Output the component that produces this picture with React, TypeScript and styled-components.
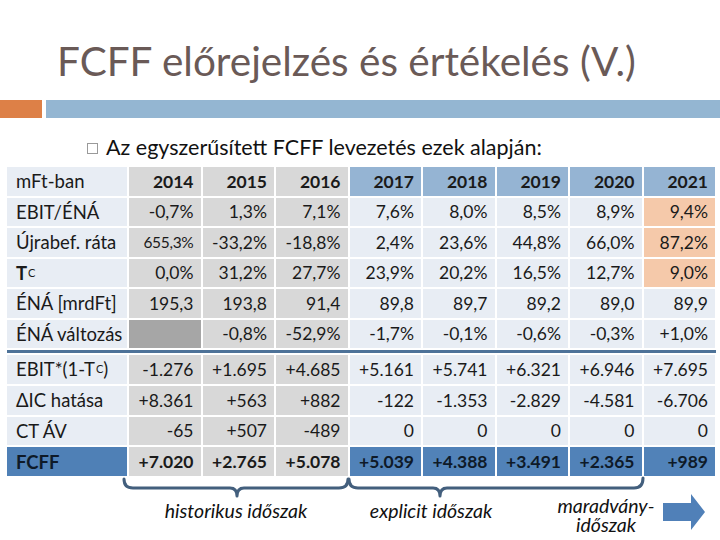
import React from "react";
import styled, { createGlobalStyle } from "styled-components";

const Global = createGlobalStyle`
  html, body { margin: 0; padding: 0; background: #ffffff; }
  body { width: 720px; height: 540px; overflow: hidden; font-family: Lato, "Open Sans", sans-serif; }
`;

const Page = styled.div`
  width: 720px;
  height: 540px;
  display: flex;
  flex-direction: column;
  background: #fff;
  & > * { flex: none; }
`;

const Title = styled.h1`
  margin: 36px 0 0 57px;
  font-family: Lato, sans-serif;
  font-weight: 400;
  font-size: 40.5px;
  line-height: 50px;
  color: #6a5a57;
  white-space: nowrap;
`;

const Bars = styled.div`
  margin-top: 14px;
  height: 18px;
  display: flex;
  gap: 4px;
`;

const Bar = styled.div<{ $color: string; $width?: number }>`
  background: ${(p) => p.$color};
  ${(p) => (p.$width ? `width: ${p.$width}px; flex: none;` : "flex: 1;")}
`;

const BulletLine = styled.div`
  margin: 16px 0 0 87px;
  height: 26px;
  display: flex;
  align-items: center;
  gap: 8px;
  font-size: 21.5px;
  color: #111;
  white-space: nowrap;
`;

const BulletBox = styled.span`
  width: 9px;
  height: 9px;
  border: 1px solid #9a9a9a;
  flex: none;
  margin-top: 2px;
`;

const Table = styled.div`
  margin: 7px 0 0 7px;
  display: grid;
  grid-template-columns: 120px repeat(8, 71.5px);
  grid-template-rows: repeat(6, 28.5px) 3px repeat(4, 28.8px);
  column-gap: 2px;
  row-gap: 2px;
`;

type Kind =
  | "label"
  | "hist"
  | "fore"
  | "foreHead"
  | "peach"
  | "dark"
  | "fcffLabel"
  | "fcffHist"
  | "fcffFore";

const bg: Record<Kind, string> = {
  label: "#e8edf4",
  hist: "#d8d8d8",
  fore: "#e8edf4",
  foreHead: "#95b4d3",
  peach: "#f5c9aa",
  dark: "#a6a6a6",
  fcffLabel: "#4f80b6",
  fcffHist: "#d8d8d8",
  fcffFore: "#5182b8",
};

const isLabel = (k: Kind) => k === "label" || k === "fcffLabel";

const Cell = styled.div<{ $kind: Kind; $bold?: boolean; $small?: boolean }>`
  background: ${(p) => bg[p.$kind]};
  display: flex;
  align-items: center;
  justify-content: ${(p) => (isLabel(p.$kind) ? "flex-start" : "flex-end")};
  padding: ${(p) => (isLabel(p.$kind) ? "0 0 0 9px" : "0 7px 0 0")};
  font-size: ${(p) => (p.$small ? "15.5px" : isLabel(p.$kind) ? "18.5px" : "17.5px")};
  font-weight: ${(p) => (p.$bold ? 700 : 400)};
  color: ${(p) => (p.$kind === "fcffFore" || p.$kind === "fcffLabel" ? "#0e1a28" : "#1a1a1a")};
  white-space: nowrap;
  letter-spacing: ${(p) => (p.$small ? "-0.3px" : "0")};
`;

const Sub = styled.sub`
  font-size: 11px;
  vertical-align: -5px;
  line-height: 0;
  margin-left: 1px;
`;

const Divider = styled.div`
  grid-column: 1 / -1;
  background: #4d7298;
  margin-right: -1px;
`;

const Braces = styled.svg`
  display: block;
`;

const Labels = styled.div`
  display: flex;
  align-items: flex-start;
  height: 41px;
`;

const Caption = styled.div<{ $left: number; $width: number; $top: number }>`
  margin-left: ${(p) => p.$left}px;
  margin-top: ${(p) => p.$top}px;
  width: ${(p) => p.$width}px;
  flex: none;
  display: flex;
  flex-direction: column;
  align-items: center;
  font-style: italic;
  font-size: 19.5px;
  line-height: 20px;
  color: #111;
  white-space: nowrap;
`;

const CaptionLine = styled.span<{ $h: number }>`
  display: block;
  height: ${(p) => p.$h}px;
  line-height: ${(p) => p.$h}px;
`;

const Arrow = styled.svg`
  display: block;
  flex: none;
  margin-top: -4px;
`;

const years = ["2014", "2015", "2016", "2017", "2018", "2019", "2020", "2021"];

type Row = {
  label: React.ReactNode;
  values: string[];
  peach?: boolean;
  firstDark?: boolean;
  smallFirst?: boolean;
};

const upper: Row[] = [
  { label: "EBIT/ÉNÁ", values: ["-0,7%", "1,3%", "7,1%", "7,6%", "8,0%", "8,5%", "8,9%", "9,4%"], peach: true },
  {
    label: "Újrabef. ráta",
    values: ["655,3%", "-33,2%", "-18,8%", "2,4%", "23,6%", "44,8%", "66,0%", "87,2%"],
    peach: true,
    smallFirst: true,
  },
  {
    label: (
      <>
        <b>T</b>
        <Sub>C</Sub>
      </>
    ),
    values: ["0,0%", "31,2%", "27,7%", "23,9%", "20,2%", "16,5%", "12,7%", "9,0%"],
    peach: true,
  },
  { label: "ÉNÁ [mrdFt]", values: ["195,3", "193,8", "91,4", "89,8", "89,7", "89,2", "89,0", "89,9"] },
  {
    label: "ÉNÁ változás",
    values: ["", "-0,8%", "-52,9%", "-1,7%", "-0,1%", "-0,6%", "-0,3%", "+1,0%"],
    firstDark: true,
  },
];

const lower: Row[] = [
  {
    label: (
      <>
        EBIT*(1-T<Sub>C</Sub>)
      </>
    ),
    values: ["-1.276", "+1.695", "+4.685", "+5.161", "+5.741", "+6.321", "+6.946", "+7.695"],
  },
  { label: "ΔIC hatása", values: ["+8.361", "+563", "+882", "-122", "-1.353", "-2.829", "-4.581", "-6.706"] },
  { label: "CT ÁV", values: ["-65", "+507", "-489", "0", "0", "0", "0", "0"] },
];

const fcff = ["+7.020", "+2.765", "+5.078", "+5.039", "+4.388", "+3.491", "+2.365", "+989"];

function renderRow(r: Row, ri: number) {
  return (
    <React.Fragment key={ri}>
      <Cell $kind="label">{r.label}</Cell>
      {r.values.map((v, i) => {
        let kind: Kind = i < 3 ? "hist" : "fore";
        if (r.peach && i === 7) kind = "peach";
        if (r.firstDark && i === 0) kind = "dark";
        return (
          <Cell key={i} $kind={kind} $small={r.smallFirst && i === 0}>
            {v}
          </Cell>
        );
      })}
    </React.Fragment>
  );
}

export default function App() {
  return (
    <Page>
      <Global />
      <Title>FCFF előrejelzés és értékelés (V.)</Title>
      <Bars>
        <Bar $color="#dd8047" $width={42} />
        <Bar $color="#94b6d2" />
      </Bars>
      <BulletLine>
        <BulletBox />
        <span>Az egyszerűsített FCFF levezetés ezek alapján:</span>
      </BulletLine>
      <Table>
        <Cell $kind="label">mFt-ban</Cell>
        {years.map((y, i) => (
          <Cell key={y} $kind={i < 3 ? "hist" : "foreHead"} $bold>
            {y}
          </Cell>
        ))}
        {upper.map(renderRow)}
        <Divider />
        {lower.map((r, i) => renderRow(r, i + 10))}
        <Cell $kind="fcffLabel" $bold>
          FCFF
        </Cell>
        {fcff.map((v, i) => (
          <Cell key={i} $kind={i < 3 ? "fcffHist" : "fcffFore"} $bold>
            {v}
          </Cell>
        ))}
      </Table>
      <Braces width="720" height="22" viewBox="0 0 720 22">
        <g fill="none" stroke="#435f7d" strokeWidth="3" strokeLinejoin="round" strokeLinecap="round">
          <path d="M124,3 Q124,12 133,12 L230,12 Q237,12 237,20 Q237,12 244,12 L339,12 Q348,12 348,3" />
          <path d="M349,3 Q349,12 358,12 L433,12 Q440,12 440,20 Q440,12 447,12 L634,12 Q643,12 643,2" />
        </g>
      </Braces>
      <Labels>
        <Caption $left={156} $width={160} $top={3}>historikus időszak</Caption>
        <Caption $left={40} $width={150} $top={3}>explicit időszak</Caption>
        <Caption $left={44} $width={112} $top={-2}>
          <CaptionLine $h={19}>maradvány-</CaptionLine>
          <CaptionLine $h={19}>időszak</CaptionLine>
        </Caption>
        <Arrow width="44" height="36" viewBox="0 0 44 36">
          <path d="M1,9 L29,9 L29,0 L43,18 L29,36 L29,27 L1,27 Z" fill="#5080b8" />
        </Arrow>
      </Labels>
    </Page>
  );
}
